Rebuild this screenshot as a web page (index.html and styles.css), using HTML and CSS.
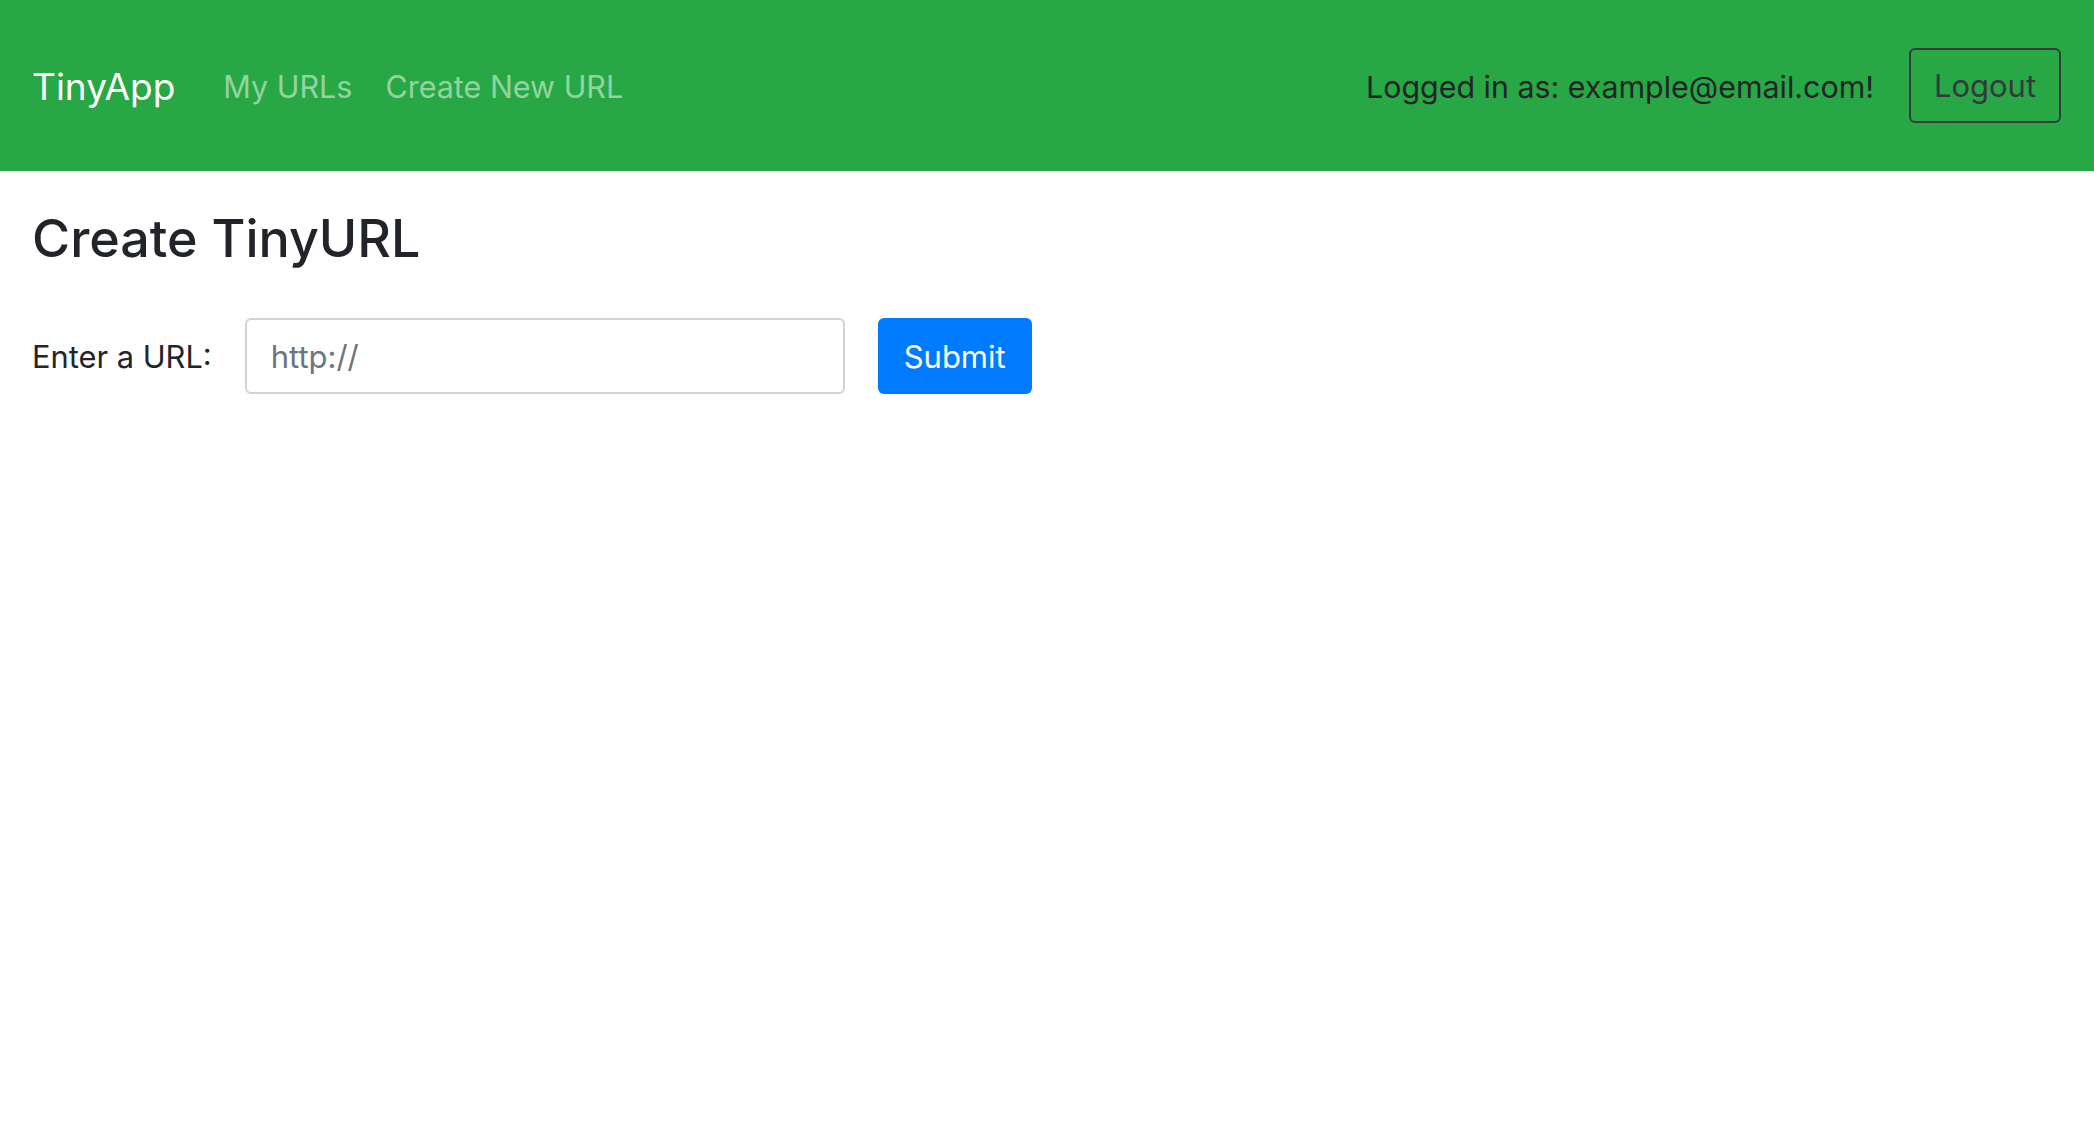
FILE: index.html
```html
<!DOCTYPE html>
<html lang="en">
<head>
    <meta charset="UTF-8">
    <meta name="viewport" content="width=device-width, initial-scale=1.0">
    <title>TinyApp</title>
    <link rel="stylesheet" href="styles.css">
</head>
<body>
    <nav class="navbar">
        <a class="brand" href="#">TinyApp</a>
        <div class="nav-links">
            <a class="nav-link" href="#">My URLs</a>
            <a class="nav-link" href="#">Create New URL</a>
        </div>
        <div class="nav-user">
            <span class="user-text">Logged in as: example@email.com!</span>
            <button class="btn-logout" type="button">Logout</button>
        </div>
    </nav>

    <main class="content">
        <h1 class="title">Create TinyURL</h1>
        <form class="url-form">
            <label class="url-label" for="longURL">Enter a URL:</label>
            <input class="url-input" type="text" id="longURL" name="longURL" placeholder="http://">
            <button class="btn-submit" type="submit">Submit</button>
        </form>
    </main>
</body>
</html>
```

FILE: styles.css
```css
body {
    margin: 0;
    font-family: Inter, "Liberation Sans", sans-serif;
    color: #212529;
    background-color: #fff;
}
.navbar {
    display: flex;
    align-items: center;
    height: 171px;
    padding: 2px 33px 0 32px;
    background-color: #28a745;
    box-sizing: border-box;
}
.brand {
    font-size: 37px;
    color: #fff;
    text-decoration: none;
    margin-right: 48px;
}
.nav-links {
    display: flex;
    gap: 33px;
}
.nav-link {
    font-size: 30.5px;
    color: rgba(255, 255, 255, 0.5);
    text-decoration: none;
}
.nav-user {
    margin-left: auto;
    display: flex;
    align-items: center;
    gap: 35px;
}
.user-text {
    font-size: 30.4px;
    color: #212529;
}
.btn-logout {
    width: 152px;
    height: 75px;
    margin-top: -2px;
    font-family: inherit;
    font-size: 31px;
    color: #343a40;
    background: transparent;
    border: 2px solid #343a40;
    border-radius: 6px;
}
.content {
    padding: 0 32px;
}
.title {
    margin: 0;
    padding-top: 37px;
    font-size: 52px;
    font-weight: 500;
    line-height: 1.2;
}
.url-form {
    display: flex;
    align-items: center;
    gap: 33px;
    margin-top: 48px;
}
.url-label {
    font-size: 30.8px;
}
.url-input {
    width: 600px;
    height: 76px;
    box-sizing: border-box;
    padding: 0 24px;
    font-family: inherit;
    font-size: 31px;
    color: #495057;
    border: 2px solid #ced4da;
    border-radius: 6px;
}
.url-input::placeholder {
    color: #6c757d;
}
.btn-submit {
    width: 154px;
    height: 76px;
    font-family: inherit;
    font-size: 31px;
    color: #fff;
    background-color: #007bff;
    border: none;
    border-radius: 6px;
}
```
